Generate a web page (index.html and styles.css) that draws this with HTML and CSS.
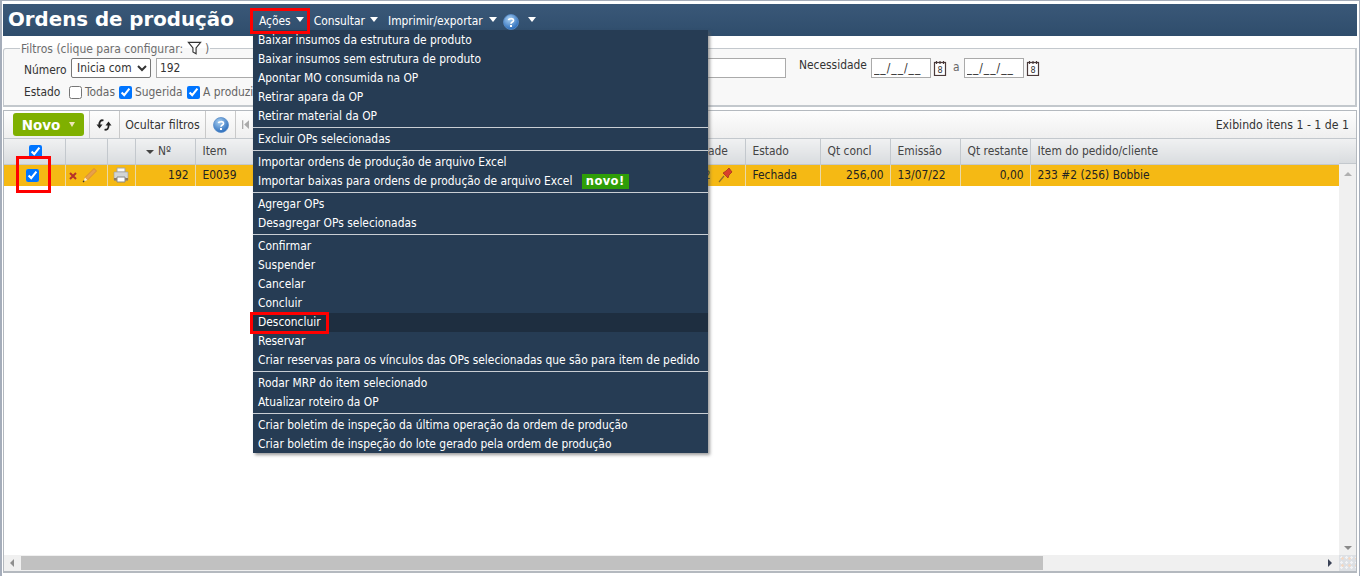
FILE: index.html
```html
<!DOCTYPE html>
<html lang="pt-BR">
<head>
<meta charset="utf-8">
<title>Ordens de produção</title>
<link rel="stylesheet" href="styles.css">
</head>
<body>
<div class="app">
  <header class="topbar">
    <h1 class="title">Ordens de produção</h1>
    <nav class="topnav">
      <span class="navitem">Ações<i class="caret"></i></span>
      <span class="navitem">Consultar<i class="caret"></i></span>
      <span class="navitem">Imprimir/exportar<i class="caret"></i></span>
      <svg class="help help-top" viewBox="0 0 16 16"><use href="#help"></use></svg>
      <i class="caret caret-last"></i>
    </nav>
  </header>

  <fieldset class="filters">
    <legend>Filtros (clique para configurar: <svg class="funnel" viewBox="0 0 16 16"><path d="M1 1.500h14L9.800 8v6.500l-3.600-2V8z" fill="#fff" stroke="#333" stroke-width="1.300"/></svg> )</legend>
    <div class="frow frow-1">
      <label class="lbl lbl-num">Número</label>
      <select class="sel"><option>Inicia com</option></select>
      <input class="inp inp-num" value="192">
      <label class="lbl lbl-nec">Necessidade</label>
      <input class="inp inp-date" value="__/__/__">
      <svg class="cal" viewBox="0 0 14 16"><use href="#cal"></use></svg>
      <span class="lbl-a">a</span>
      <input class="inp inp-date" value="__/__/__">
      <svg class="cal" viewBox="0 0 14 16"><use href="#cal"></use></svg>
    </div>
    <div class="frow frow-2">
      <label class="lbl lbl-est">Estado</label>
      <label class="chk chk-todas"><input type="checkbox">Todas</label>
      <label class="chk chk-sug"><input type="checkbox" checked>Sugerida</label>
      <label class="chk chk-apr"><input type="checkbox" checked>A produzir</label>
      <label class="lbl lbl-cli">Cliente</label>
      <input class="inp inp-cli">
      <svg class="search" viewBox="0 0 14 14"><circle cx="5.500" cy="5.500" r="4" fill="#fff" stroke="#333" stroke-width="1.200"/><path d="M8.500 8.500l4 4" stroke="#222" stroke-width="2"/></svg>
    </div>
  </fieldset>

  <section class="grid">
    <div class="toolbar">
      <button class="novo">Novo<i class="novo-caret"></i></button>
      <span class="tb-cell tb-refresh"><svg class="refresh" viewBox="0 0 16 14"><path d="M7.500 2.500C5 1.500 3 3.500 3.500 7M8.500 11.500c2.500 1 4.500-1 4-4.500" fill="none" stroke="#222" stroke-width="1.800"/><path d="M0.500 6.500h6L3.500 10.500zM9.500 7.500h6L12.500 3.500z" fill="#222"/></svg></span>
      <span class="tb-cell tb-text">Ocultar filtros</span>
      <span class="tb-cell tb-help"><svg class="help" viewBox="0 0 16 16"><use href="#help"></use></svg></span>
      <span class="tb-pager"><svg class="pager" viewBox="0 0 8 10"><path d="M0 0h1.500v10H0zM8 0v10L2.500 5z" fill="#aaa"/></svg></span>
      <span class="tb-info">Exibindo itens 1 - 1 de 1</span>
    </div>

    <div class="gridmain">
      <div class="tablewrap">
        <table class="tbl">
          <colgroup>
            <col class="c1"><col class="c2"><col class="c3"><col class="c4"><col class="c5"><col class="c6"><col class="c7"><col class="c8"><col class="c9"><col class="c10"><col class="c11">
          </colgroup>
          <thead>
            <tr>
              <th class="ctr"><input type="checkbox" class="cb-head" checked></th>
              <th></th>
              <th></th>
              <th class="th-n"><i class="sort"></i> Nº</th>
              <th>Item</th>
              <th class="th-qtd">Quantidade</th>
              <th>Estado</th>
              <th>Qt concl</th>
              <th>Emissão</th>
              <th>Qt restante</th>
              <th>Item do pedido/cliente</th>
            </tr>
          </thead>
          <tbody>
            <tr class="sel-row">
              <td class="ctr"><input type="checkbox" class="cb-row" checked></td>
              <td class="icons">
                <svg class="ic-x" viewBox="0 0 8 8"><path d="M1 1l6 6M7 1l-6 6" stroke="#b5312a" stroke-width="2"/></svg>
                <svg class="ic-pen" viewBox="0 0 16 16"><path d="M3 10.500L12 1.500l2.500 2.500L5.500 13z" fill="#e8a04a" stroke="#d08436" stroke-width=".8"/><path d="M3 10.500l-1.500 4 4-1.500z" fill="#fbeed2"/><path d="M1 15l1.300-1.300" stroke="#333" stroke-width="1.200"/></svg>
              </td>
              <td class="ctr"><svg class="ic-print" viewBox="0 0 16 16"><path d="M4 1h8v4H4z" fill="#fafafa" stroke="#a5a5a5"/><path d="M1 5h14v8H1z" fill="#d2d5d6" stroke="#9c9c9c" stroke-width=".6"/><path d="M1 11h14v2.500H1z" fill="#8f7a5e"/><path d="M4 10h8v5H4z" fill="#fff" stroke="#888"/></svg></td>
              <td class="num">192</td>
              <td>E0039</td>
              <td class="td-qtd">2<svg class="ic-pin" viewBox="0 0 16 16"><path d="M1 15l5-6" stroke="#8a6d2d" stroke-width="1.200"/><path d="M5 6l5 5 1-3 3-3-3-4-3 3z" fill="#d9412c" stroke="#9c2a1d" stroke-width=".7"/></svg></td>
              <td>Fechada</td>
              <td class="num">256,00</td>
              <td>13/07/22</td>
              <td class="num">0,00</td>
              <td>233 #2 (256) Bobbie</td>
            </tr>
          </tbody>
        </table>
      </div>
      <div class="vscroll">
        <div class="vhead"></div>
        <i class="arr arr-up"></i>
        <i class="arr arr-down"></i>
      </div>
    </div>
    <div class="hscroll">
      <i class="arr arr-left"></i>
      <div class="htrack"><div class="hthumb"></div></div>
      <i class="arr arr-right"></i>
      <div class="corner"></div>
    </div>
  </section>

  <ul class="menu">
    <li>Baixar insumos da estrutura de produto</li>
    <li>Baixar insumos sem estrutura de produto</li>
    <li>Apontar MO consumida na OP</li>
    <li>Retirar apara da OP</li>
    <li>Retirar material da OP</li>
    <li class="sep"></li>
    <li>Excluir OPs selecionadas</li>
    <li class="sep"></li>
    <li>Importar ordens de produção de arquivo Excel</li>
    <li>Importar baixas para ordens de produção de arquivo Excel <span class="badge">novo!</span></li>
    <li class="sep"></li>
    <li>Agregar OPs</li>
    <li>Desagregar OPs selecionadas</li>
    <li class="sep"></li>
    <li>Confirmar</li>
    <li>Suspender</li>
    <li>Cancelar</li>
    <li>Concluir</li>
    <li class="hover">Desconcluir</li>
    <li>Reservar</li>
    <li>Criar reservas para os vínculos das OPs selecionadas que são para item de pedido</li>
    <li class="sep"></li>
    <li>Rodar MRP do item selecionado</li>
    <li>Atualizar roteiro da OP</li>
    <li class="sep"></li>
    <li>Criar boletim de inspeção da última operação da ordem de produção</li>
    <li>Criar boletim de inspeção do lote gerado pela ordem de produção</li>
  </ul>

  <div class="mark mark-acoes"></div>
  <div class="mark mark-check"></div>
  <div class="mark mark-desc"></div>
</div>

<svg class="defs" width="0" height="0">
  <defs>
    <radialGradient id="hg" cx="40%" cy="30%" r="75%"><stop offset="0" stop-color="#a9d0f2"/><stop offset="1" stop-color="#2266b8"/></radialGradient>
    <symbol id="help" viewBox="0 0 16 16">
      <circle cx="8" cy="8" r="7.500" fill="url(#hg)" stroke="#5b8ec9" stroke-width=".8"/>
      <path d="M5.500 6.200C5.700 4.400 10.500 4 10.500 6.400 10.500 8 8 8 8 9.800" fill="none" stroke="#fff" stroke-width="1.700"/>
      <rect x="7" y="11" width="2" height="2" fill="#fff"/>
    </symbol>
    <symbol id="cal" viewBox="0 0 14 16">
      <rect x="1.500" y="2.500" width="11" height="13" fill="#fff" stroke="#4a3a3a" stroke-width="1.200"/>
      <path d="M3.500 1v3M7 1v3M10.500 1v3" stroke="#4a3a3a" stroke-width="1.200"/>
      <text x="7" y="13" text-anchor="middle" font-family="DejaVu Sans Condensed" font-size="9" fill="#333">8</text>
    </symbol>
  </defs>
</svg>
</body>
</html>
```
FILE: styles.css
```css
* { box-sizing: border-box; }
html, body { margin: 0; height: 100%; overflow: hidden; background: #fff; }
body {
  font-family: "DejaVu Sans Condensed", "DejaVu Sans", sans-serif;
  font-stretch: condensed;
  font-size: 11.900px;
  color: #333;
}
.defs { position: absolute; }
.app {
  position: relative;
  width: 1360px;
  height: 576px;
  padding: 3px 2px 3px 1px;
  border: solid #a5adba;
  border-width: 1px 1px 0 2px;
  display: flex;
  flex-direction: column;
  background: #fff;
}
/* header */
.topbar {
  height: 32px;
  flex: none;
  background: linear-gradient(#3a5878, #2f4d6c);
  display: flex;
  align-items: center;
  padding-left: 5px;
}
.title {
  margin: 0;
  width: 245px;
  font: bold 19.800px/30px "DejaVu Sans", sans-serif;
  color: #fff;
  white-space: nowrap;
}
.topnav {
  display: flex;
  align-items: center;
  color: #fff;
  font-size: 11.900px;
  padding-top: 1px;
}
.navitem { display: flex; align-items: center; margin-right: 10px; }
.navitem:first-child { margin-left: 6px; margin-right: 10px; }
.navitem:nth-child(3) { margin-right: 6px; }
.navitem:nth-child(3) .caret { margin-left: 6px; }
.caret {
  display: inline-block;
  width: 0; height: 0;
  margin-left: 5px;
  margin-top: -3px;
  border-left: 4.500px solid transparent;
  border-right: 4.500px solid transparent;
  border-top: 5px solid #fff;
}
.help { width: 16px; height: 16px; display: block; }
.help-top { margin-top: 3px; }
.caret-last { margin-left: 9px; }
/* filters */
.filters {
  flex: none;
  height: 66px;
  margin: 5px 0 0;
  padding: 0 0 0 20px;
  border: solid #c3c8cd;
  border-width: 1px 2px 2px 1px;
  border-radius: 3px 0 0 0;
  background: #f8f8f8;
  position: relative;
}
.filters legend {
  padding: 0 1px;
  margin-left: -4px;
  color: #6d6d6d;
  font-size: 12px;
  line-height: 14px;
}
.funnel { width: 15px; height: 14px; vertical-align: -2px; }
.frow { display: flex; align-items: center; height: 20px; }
.frow-1 { margin-top: 2px; }
.frow-2 { margin-top: 4px; }
.lbl { color: #333; }
.lbl-num { width: 47px; padding-top: 4px; }
.lbl-est { width: 45px; }
.sel {
  width: 80px; height: 20px; margin: 0;
  font: inherit; color: #333; background: #fff;
  border: 1px solid #777; border-radius: 2px; padding: 0 0 0 1px;
}
.inp {
  height: 20px; margin: 0; padding: 0 3px;
  border: 1px solid #aaa; border-radius: 0;
  font: inherit; color: #333; background: #fff; outline: 0;
}
.inp-num { width: 630px; margin-left: 5px; }
.lbl-nec { margin-left: 13px; width: 72px; padding-bottom: 6px; }
.inp-date { width: 60px; letter-spacing: 1px; padding: 0 2px; }
.cal { width: 14px; height: 16px; margin-left: 2px; }
.lbl-a { margin: 0 4px 2px 6px; color: #666; }
.chk { display: flex; align-items: center; color: #666; }
.chk input { margin: 0 3px 0 0; width: 13px; height: 13px; accent-color: #0075ff; }
.chk-todas { width: 50px; }
.chk-sug { width: 68px; }
.chk-apr { width: 90px; }
.lbl-cli { margin-left: 228px; width: 37px; text-align: right; }
.inp-cli { width: 109px; margin-left: 4px; }
.search { width: 14px; height: 14px; margin-left: 5px; }
/* grid */
.grid {
  flex: 1;
  min-height: 0;
  margin-top: 3px;
  border: solid #b4b9bf;
  border-width: 1px 1px 2px 1px;
  display: flex;
  flex-direction: column;
  background: #fff;
}
.toolbar {
  flex: none;
  height: 28px;
  display: flex;
  align-items: stretch;
  background: linear-gradient(#fdfdfd, #efefef);
  border-bottom: 1px solid #c3c8cd;
  padding-left: 9px;
  color: #333;
}
.novo {
  width: 71px; height: 23px; margin: 2px 0 0;
  border: 0; border-radius: 3px;
  background: #7fb000;
  color: #fff;
  font: bold 13.500px "DejaVu Sans", sans-serif;
  display: flex; align-items: center; justify-content: center;
  padding: 0;
}
.novo-caret {
  margin-left: 9px; width: 0; height: 0;
  border-left: 3px solid transparent; border-right: 3px solid transparent;
  border-top: 5px solid #f0e6b8;
}
.tb-cell { display: flex; align-items: center; border-right: 1px solid #c9c9c9; }
.tb-refresh { margin-left: 5px; padding: 0 6px; border-left: 1px solid #c9c9c9; width: 31px; }
.refresh { width: 16px; height: 14px; }
.tb-text { width: 86px; justify-content: center; font-size: 12.200px; }
.tb-help { width: 30px; justify-content: center; }
.tb-pager { display: flex; align-items: center; margin-left: 6px; }
.pager { width: 7px; height: 9px; }
.tb-info { margin-left: auto; padding-right: 7px; align-self: center; font-size: 12.200px; }
.gridmain { flex: 1; min-height: 0; display: flex; }
.tablewrap { flex: 1; min-width: 0; overflow: hidden; }
.tbl { table-layout: fixed; border-collapse: collapse; width: 1335px; }
.c1 { width: 61px; } .c2 { width: 42px; } .c3 { width: 28px; } .c4 { width: 60px; }
.c5 { width: 300px; } .c6 { width: 250px; } .c7 { width: 75px; } .c8 { width: 70px; }
.c9 { width: 70px; } .c10 { width: 70px; } .c11 { width: 309px; }
.tbl th {
  height: 25px; padding: 0 7px; text-align: left; font-weight: normal;
  color: #444;
  background: linear-gradient(#f0f1f2, #d9dcdf);
  border-right: 1px solid #c3c8cd;
  border-bottom: 1px solid #c3c8cd;
  white-space: nowrap; overflow: hidden;
}
.tbl td {
  height: 22px; padding: 0 7px; background: #f5b914; color: #222;
  border-right: 1px solid #e9d9a8;
  white-space: nowrap; overflow: hidden;
}
.tbl .ctr { text-align: center; padding: 0; }
.tbl .num { text-align: right; padding-right: 6px; }
.th-n { padding-left: 10px !important; }
.sort { display: inline-block; width: 0; height: 0; margin-right: 1px; vertical-align: 1px;
  border-left: 4px solid transparent; border-right: 4px solid transparent; border-top: 4px solid #444; }
.tbl th.th-qtd { padding-left: 170px; }
.tbl .td-qtd { text-align: right; padding-right: 11px; }
input[type=checkbox] { accent-color: #0075ff; }
.cb-head, .cb-row { width: 13px; height: 13px; margin: 0; vertical-align: middle; }
.cb-head { margin-left: 3px; }
.cb-row { margin-right: 3px; }
.tbl .icons { padding: 0 0 0 3px; }
.ic-x { width: 8px; height: 8px; vertical-align: -1px; }
.ic-pen { width: 16px; height: 16px; margin-left: 2px; vertical-align: -4px; }
.ic-print { width: 16px; height: 16px; vertical-align: middle; }
.ic-pin { width: 16px; height: 16px; margin-left: 7px; vertical-align: -4px; }
.vscroll {
  flex: none; width: 17px; background: #f0f0f0;
  display: flex; flex-direction: column; align-items: center;
  padding-bottom: 5px;
}
.vhead {
  flex: none; align-self: stretch; height: 25px;
  background: linear-gradient(#f0f1f2, #d9dcdf);
  border-bottom: 1px solid #c3c8cd;
}
.arr { display: block; width: 0; height: 0; }
.arr-up { margin-top: 8px; border-left: 4px solid transparent; border-right: 4px solid transparent; border-bottom: 4px solid #b0b0b0; }
.arr-down { margin-top: auto; border-left: 4px solid transparent; border-right: 4px solid transparent; border-top: 4px solid #8a8a8a; }
.hscroll { flex: none; height: 16px; display: flex; align-items: center; background: #f0f0f0; }
.arr-left { margin: 0 7px 0 6px; border-top: 4px solid transparent; border-bottom: 4px solid transparent; border-right: 4px solid #8f8f8f; }
.htrack { flex: 1; height: 14px; }
.hthumb { width: 1022px; height: 100%; background: #c1c1c1; }
.arr-right { margin: 0 7px 0 5px; border-top: 4px solid transparent; border-bottom: 4px solid transparent; border-left: 4px solid #3a4256; }
.corner {
  width: 17px; height: 16px; background-color: #dde0e4;
  background-image: radial-gradient(#f4d9c4 1px, transparent 1.500px), radial-gradient(#f2f3f5 1px, transparent 1.500px);
  background-size: 7px 7px, 5px 5px;
}
/* menu */
.menu {
  position: absolute; left: 251px; top: 29px; width: 455px; height: 423px;
  margin: 0; padding: 1px 0 0; list-style: none;
  background: #263c54; color: #fff;
  box-shadow: 2px 2px 3px rgba(90, 90, 90, .6);
}
.menu li { height: 19px; line-height: 18px; padding-left: 5px; white-space: nowrap; }
.menu .sep { height: 1px; margin: 1px 0 2px; padding: 0; background: #c9ced4; }
.menu .hover { background: #1e2e40; }
.badge {
  display: inline-block; margin-left: 6px; height: 15px; padding: 0 4px;
  line-height: 15px; background: #2f9e08; color: #fff;
  font: bold 11.500px/15px "DejaVu Sans", sans-serif; letter-spacing: .4px;
}
/* annotation marks */
.mark { position: absolute; border: 3px solid #f00; }
.mark-acoes { left: 248px; top: 7px; width: 60px; height: 26px; }
.mark-check { left: 14px; top: 155px; width: 35px; height: 37px; }
.mark-desc { left: 248px; top: 311px; width: 79px; height: 22px; }
```
